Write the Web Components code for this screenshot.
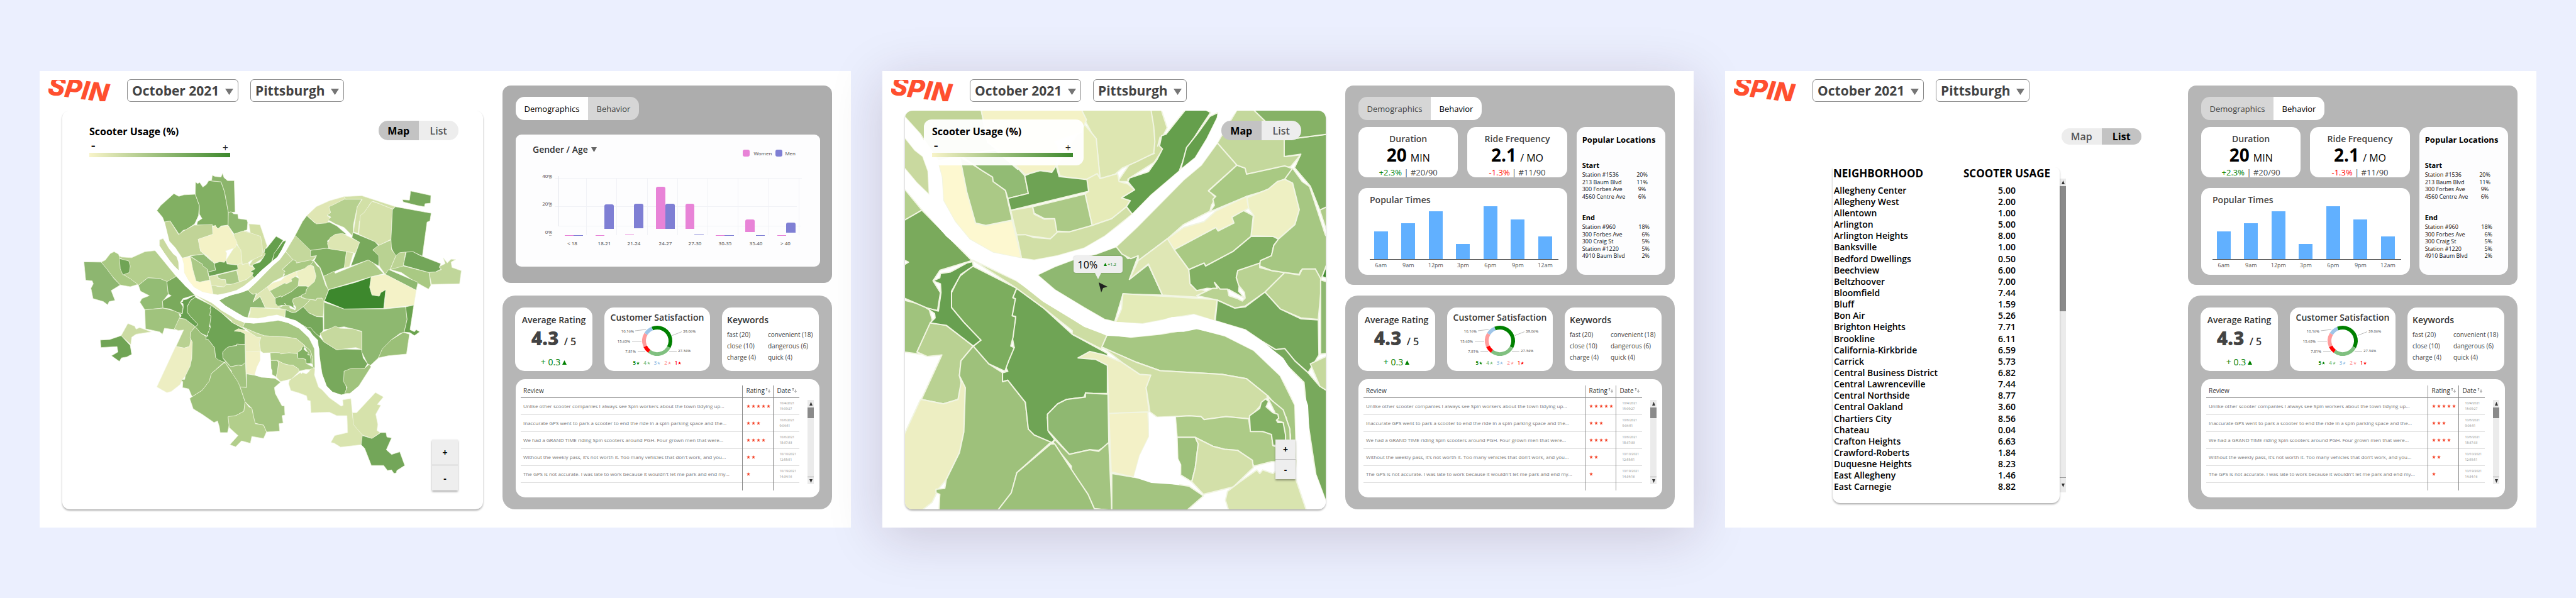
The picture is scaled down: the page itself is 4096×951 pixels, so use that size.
<!DOCTYPE html>
<html lang="en">
<head>
<meta charset="utf-8">
<meta name="viewport" content="width=device-width, initial-scale=1">
<title>Spin scooter dashboard</title>
<style>
  body { margin: 0; background: #ebeffe; font-family: "Open Sans", "Noto Sans", sans-serif; color: #000; }
</style>
</head>
<body>
<spin-board>
  <spin-screen>
    <spin-header slot="main"></spin-header>
    <usage-map slot="main" view="city"></usage-map>
    <demographics-panel slot="aside"></demographics-panel>
    <reviews-panel slot="aside"></reviews-panel>
  </spin-screen>
  <spin-screen raised>
    <spin-header slot="main"></spin-header>
    <usage-map slot="main" view="detail"></usage-map>
    <behavior-panel slot="aside"></behavior-panel>
    <reviews-panel slot="aside"></reviews-panel>
  </spin-screen>
  <spin-screen>
    <spin-header slot="main"></spin-header>
    <usage-list slot="main"></usage-list>
    <behavior-panel slot="aside"></behavior-panel>
    <reviews-panel slot="aside"></reviews-panel>
  </spin-screen>
</spin-board>

<script>
const BASE = `
  :host, *, *::before, *::after { box-sizing: border-box; }
  *, *::before, *::after { margin: 0; padding: 0; }
  :host { display: block; }
  button, select { font: inherit; color: inherit; border: 0; background: none; cursor: pointer; }
  table { border-collapse: collapse; }
  ul, ol { list-style: none; }
  svg { display: block; }
`;
function define(name, css, markup) {
  customElements.define(name, class extends HTMLElement {
    constructor() {
      super();
      const root = this.attachShadow({ mode: 'open' });
      const html = typeof markup === 'function' ? markup(this) : markup;
      root.innerHTML = `<style>${BASE}${css}</style>${html}`;
    }
  });
}
const down = (w, h, fill) => `<svg width="${w}" height="${h}" viewBox="0 0 10 10" preserveAspectRatio="none" aria-hidden="true"><path d="M0 0h10L5 10z" fill="${fill}"/></svg>`;
const up = (w, h, fill) => `<svg width="${w}" height="${h}" viewBox="0 0 10 10" preserveAspectRatio="none" aria-hidden="true"><path d="M0 10h10L5 0z" fill="${fill}"/></svg>`;
const star = (s, fill) => `<svg width="${s}" height="${s}" viewBox="0 0 20 20" aria-hidden="true"><path d="M10 0l2.6 7H20l-5.900 4.500L16.300 19 10 14.500 3.700 19l2.200-7.500L0 7h7.400z" fill="${fill}"/></svg>`;

/* Page frame */
define('spin-board', `
  :host { display: grid; grid-template-columns: repeat(3, minmax(0, 1fr)); gap: 50px;
          padding: 113px 63px 112px; overflow: hidden; }
`, `<slot></slot>`);

define('spin-screen', `
  :host { display: grid; grid-template-columns: minmax(0, 705fr) minmax(0, 524fr); column-gap: 31px;
          padding-right: 30px; background: #fff; }
  :host([raised]) { box-shadow: 0 14px 80px rgba(60, 20, 50, .18); }
  main { display: flex; flex-direction: column; padding: 13px 0 29px; }
  aside { display: flex; flex-direction: column; justify-content: space-between; gap: 16px; padding: 23px 0 29px; }
`, `<main><slot name="main"></slot></main><aside><slot name="aside"></slot></aside>`);

define('spin-header', `
  :host { display: flex; align-items: center; padding-left: 14px; height: 36px; flex: none; }
  .logo { overflow: hidden; margin-right: 25px; }
  .logo text { font: italic 800 41px Inter, "Open Sans", sans-serif; fill: #ff4f2f; }
  label { display: grid; align-items: center; margin-right: 19px; }
  select { grid-area: 1 / 1; appearance: none; height: 36px; border: 1px solid #8b8b8b; border-radius: 6px;
           background: #fff; color: #434343; font-size: 21px; font-weight: 700; padding: 0 28px 0 7px; }
  label svg { grid-area: 1 / 1; justify-self: end; margin: 3px 8px 0 0; pointer-events: none; }
  .month { width: 177px; } .city { width: 149px; }
`, `
  <svg class="logo" width="100" height="34" viewBox="0 0 100 34" role="img" aria-label="Spin"><text x="1" y="23" transform="rotate(8)">SPIN</text></svg>
  <label class="month"><select aria-label="Month"><option>October 2021</option></select>${down(13, 10, '#757575')}</label>
  <label class="city"><select aria-label="City"><option>Pittsburgh</option></select>${down(13, 10, '#757575')}</label>
`);

define('view-switch', `
  :host { display: inline-flex; width: 127px; height: var(--h, 31px); border-radius: 15px; overflow: hidden; flex: none; }
  button { flex: 1; background: #ededed; color: #555; font-size: 16px; font-weight: 600; }
  button[aria-pressed=true] { background: #c3c3c3; color: #000; font-weight: 700; }
`, el => ['Map', 'List'].map(t =>
  `<button type="button" aria-pressed="${t === el.getAttribute('value')}">${t}</button>`).join(''));

define('panel-tabs', `
  :host { display: flex; width: 196px; height: 37px; border-radius: 14px; overflow: hidden; flex: none; }
  button { background: #d6d6d6; color: #434343; font-size: 13px; font-weight: 500; }
  button:first-of-type { width: 115px; } button:last-of-type { width: 81px; }
  button[aria-pressed=true] { background: #fff; color: #000; }
`, el => ['Demographics', 'Behavior'].map(t =>
  `<button type="button" aria-pressed="${t === el.getAttribute('value')}">${t}</button>`).join(''));

define('scroll-track', `
  :host { display: flex; flex-direction: column; width: 10px; background: #ebebeb; flex: none; }
  span { display: flex; height: 12px; align-items: center; justify-content: center; flex: none; }
  i { background: #8a8a8a; height: var(--thumb, 17px); flex: none; }
  span:last-child { margin-top: auto; height: var(--foot, 12px); border-top: 1px solid #999; }
`, `<span>${up(5, 6, '#333')}</span><i></i><span>${down(5, 6, '#333')}</span>`);

/* City map. Points are in the city grid; "D" switches to the finer downtown grid, "@" switches back. */
const LAND = [
 ['#82b063','421,503 434,486 479,446 496,455 513,450 552,448 566,486 563,520 550,548 522,567 510,570 497,584 488,570 466,538 447,542 440,525'],
 ['#82b063','552,448 553,407 560,412 567,408 578,424 590,415 598,402 640,406 652,440 665,510 664,552 640,555 630,565 620,555 557,552 560,540 575,530 566,515 566,486'],
 ['#8cb56c','598,402 608,400 610,384 620,388 640,390 645,377 650,392 662,402 685,402 688,508 665,510 652,440 640,406'],
 ['#8eb86f','665,510 674,507 683,514 697,515 699,530 728,534 731,543 729,568 685,583 664,553'],
 ['#c1d497','447,542 466,538 495,584 510,573 548,552 557,552 610,550 612,583 562,600 570,640 610,672 592,660 580,650 537,655 508,664 485,630 463,606'],
 ['#d2dfa4','735,548 773,551 783,580 797,622 785,645 D 960,255 970,295 940,340 850,397 850,405 815,405 860,340 940,310 @ 720,570 740,578'],
 ['#dde6b1','682,583 715,572 745,580 775,590 780,620 D 942,270 938,310 880,338 830,360 805,382 755,395 742,270 688,170'],
 ['#e8edbb','D 700,210 742,260 755,395 710,398 640,390 618,385 608,350'],
 ['#e6ebb8','D 704,400 745,378 755,395 815,378 820,405 850,413 873,433 828,460 858,468 845,490 795,530 728,553 704,447 716,438'],
 ['#f4f2c6','612,560 620,552 628,565 640,557 664,553 680,582 695,612 D 690,240 600,270 612,290 605,355 595,372 550,368 500,382 465,350 440,320 @ 570,640 562,600 612,583'],
 ['#c9d99f','430,602 442,597 462,630 478,650 D 150,320 168,370 172,450 130,410 89,362 @ 445,645 430,622'],
 ['#fdf8d0','508,663 535,660 D 285,350 300,430 330,545 365,553 455,537 487,664 390,645 310,600 260,540 220,470 215,390 200,335'],
 ['#abc986','D 275,320 340,360 390,390 432,435 455,535 365,553 330,545 300,440 280,340'],
 ['#92bb74','D 275,315 @ 580,650 608,674 D 465,350 498,385 510,445 440,462 432,435 390,405 388,390 355,370'],
 ['#6ea354','D 498,385 515,378 550,368 590,374 605,352 615,388 710,398 716,438 450,502 440,462 510,445'],
 ['#dde6b2','D 450,502 525,490 530,515 565,532 600,530 610,578 585,598 530,590 470,585'],
 ['#abc986','D 525,490 704,447 728,553 690,568 650,575 607,572 600,530 565,530 530,512'],
 ['#d1dfa6','D 470,585 500,584 530,594 585,598 610,575 650,575 728,553 795,530 845,490 865,515 770,590 700,630 610,655 530,670 487,664'],
 ['#659f4c','828,590 852,603 D 1100,220 1055,290 1025,370 930,450 865,515 845,490 858,470 828,460 873,433 850,405 855,393 920,372 950,330 968,295 958,285 965,250 980,245'],
 ['#659f4c','D 1158,172 1130,185 1090,240 1050,290 1030,365 1080,325 1120,260 1155,190'],
 ['#b4cf8d','282,660 285,652 300,660 335,662 380,642 415,638 487,725 455,745 430,732 390,730 358,755 330,735 300,715 300,665'],
 ['#a9c983','231,677 245,670 262,648 275,642 290,650 296,668 298,690 305,718 330,733 356,752 330,760 296,754 262,718'],
 ['#8db670','172,676 231,677 250,700 275,733 296,754 265,773 278,806 258,810 253,821 238,810 203,800 196,765 204,750 200,740 178,738'],
 ['#70a455','293,665 325,673 330,690 327,712 305,720 296,700'],
 ['#93bc74','358,755 390,730 430,732 455,742 460,785 440,810 442,832 380,838 363,812 370,800 395,790 365,775'],
 ['#a0c37d','380,838 442,832 495,845 500,862 485,905 447,900 440,920 430,912 382,902'],
 ['#7aaa5c','487,725 550,788 510,800 D 185,740 210,780 200,840 @ 495,848 465,835 442,832 440,808 470,790 460,785 455,743'],
 ['#cbdba2','299,925 322,884 345,893 350,903 362,898 380,904 402,912 350,920 335,930 332,955'],
 ['#70a455','228,940 260,938 299,925 330,958 335,988 318,997 300,1000 293,1012 266,993 288,980 285,962 230,965'],
 ['#b9d192','D 175,882 230,890 322,960 280,1010 275,1060 285,1100 270,1140 220,1155 145,1140 215,990 165,995 130,980'],
 ['#edeec2','D 145,1140 220,1155 270,1140 285,1060 295,1100 290,1250 275,1320 230,1410 205,1440 @ 500,1090 470,1113 455,1117 421,1098 485,962'],
 ['#9ec17b','D 322,960 375,1020 422,1050 422,1080 440,1075 500,1150 510,1240 590,1285 @ 650,1015 607,1053 600,1080 575,1110 541,1131 530,1105 D 235,1520 205,1515 208,1460 195,1455 195,1443 225,1440 230,1410 275,1320 290,1250 295,1100 275,1060 280,1010'],
 ['#6fa455','D 470,765 560,830 660,920 780,985 780,1120 705,1120 700,1132 640,1140 600,1165 575,1200 580,1250 600,1275 590,1285 530,1260 510,1240 500,1150 440,1075 422,1080 422,1050 440,1045 432,1030 443,1010 447,965 462,965 455,930 467,860 455,858 463,800 457,797'],
 ['#7cad5e','D 320,690 470,765 457,797 466,800 455,858 467,862 458,930 450,960 462,965 443,1010 430,1045 375,1020 322,960 348,940 290,880 248,830 248,780 275,725'],
 ['#68a050','D 320,675 300,680 245,710 210,715 208,730 185,740 210,750 212,780 203,842 160,830 190,850 192,865 175,882 230,890 322,960 348,940 290,880 248,830 248,775 280,718 322,690'],
 ['#cddda3','D 320,670 470,740 560,800 780,925 760,970 660,920 660,908 560,830 470,765'],
 ['#8fb871','D 575,1190 610,1155 640,1140 705,1132 705,1118 730,1120 782,1122 785,1290 750,1312 720,1310 650,1325 600,1270 577,1245'],
 ['#a3c480','D 600,1275 650,1325 720,1310 750,1315 785,1285 @ 727,1100 705,1098 D 715,1480 700,1460 657,1410 657,1365 620,1320 595,1285'],
 ['#9cc079','650,1017 607,1053 600,1078 575,1110 540,1132 533,1137 545,1172 575,1190 616,1218 628,1213 634,1232 637,1252 662,1252 668,1225 664,1200 690,1195 718,1180 722,1148 705,1098 697,1080 680,1055 D 600,1290'],
 ['#a3c480','727,1054 812,1068 825,1070 843,1082 822,1100 825,1120 848,1162 856,1162 858,1193 848,1195 852,1220 838,1222 840,1247 795,1250 785,1227 755,1220 745,1170 722,1148 705,1098 727,1100'],
 ['#b2ce8b','722,1148 735,1165 745,1170 750,1195 757,1222 785,1227 795,1250 785,1272 745,1265 740,1288 710,1280 690,1300 670,1293 698,1262 668,1235 664,1198 690,1195 718,1180'],
 ['#f3f1c7','D 785,1185 918,1182 922,1265 890,1330 870,1402 793,1385'],
 ['#edeec2','D 680,1000 720,978 770,990 830,1015 890,1055 928,1058 925,1085 912,1100 922,1182 785,1187 780,1025 740,1005'],
 ['#a6c782','D 780,920 860,930 960,920 1085,900 1180,925 1280,975 1370,1060 1420,1160 1425,1340 1405,1340 1405,1260 1390,1200 1330,1130 1255,1070 1170,1055 960,1043 880,1015 760,965'],
 ['#cfdea5','D 765,965 880,1015 960,1043 1170,1055 1255,1070 1330,1130 1290,1175 1262,1205 1185,1198 1110,1208 1100,1198 1060,1195 950,1200 925,1182 912,1100 928,1058 890,1055 830,1015'],
 ['#adcb87','D 1012,1198 1060,1195 1100,1198 1110,1208 1185,1198 1262,1205 1268,1245 1310,1248 1340,1258 1345,1295 1420,1335 1400,1350 1340,1350 1280,1365 1270,1345 1225,1312 1180,1308 1140,1298 1080,1268 1018,1268'],
 ['#a6c782','D 1325,1130 1380,1175 1403,1240 1405,1310 1388,1290 1380,1218 1360,1212 1350,1180'],
 ['#82b063','D 1320,1138 1330,1147 1322,1165 1345,1185 1362,1190 1365,1203 1357,1210 1362,1218 1380,1218 1388,1260 1388,1295 1345,1295 1340,1258 1310,1248 1268,1248 1265,1195 1300,1170 1305,1150'],
 ['#9ec17b','D 1018,1268 1080,1268 1090,1290 1080,1370 1068,1418 1030,1395 1030,1360 1020,1340'],
 ['#d3e0a9','D 1080,1268 1140,1298 1180,1308 1225,1312 1275,1345 1278,1370 1210,1435 1108,1460 1068,1418 1080,1370 1090,1290'],
 ['#d9e4af','D 1290,1378 1300,1390 1310,1378 1345,1390 1370,1370 1385,1345 1425,1340 1420,1400 1458,1511 @ 985,1108 1010,1135 1050,1163 1057,1160 1055,1142 1083,1137 1088,1185 1092,1215 1125,1262 1118,1293 1048,1301 1027,1288 1015,1285 1028,1262 1072,1252 1070,1195 1035,1195 1010,1183 947,1185 945,1145 935,1143 932,1128 905,1118 878,1110 D 1183,1480 1190,1450 1230,1420'],
 ['#d6e2ab','1088,1185 1103,1185 1167,1117 1194,1132 1173,1157 1185,1160 1168,1190 1175,1225 1172,1245 1183,1252 1155,1272 1122,1260 1092,1225'],
 ['#73a659','1122,1262 1155,1272 1185,1252 1203,1252 1206,1267 1222,1270 1204,1310 1222,1326 1250,1317 1267,1363 1240,1380 1238,1388 1230,1390 1222,1378 1208,1380 1195,1363 1153,1363 1130,1305 1118,1293'],
 ['#8fb871','D 541,720 600,692 660,670 740,650 810,625 850,665 885,655 855,735 920,685 968,788 833,785 805,878 770,870 700,830 600,770'],
 ['#e4ebb8','D 833,783 1155,803 1145,875 1075,853 1000,865 970,872 900,885 808,880 828,835'],
 ['#c4d89c','893,587 945,635 D 1390,320 1440,315 1405,355 1255,380 1222,350 1155,275'],
 ['#c3d79b','D 810,625 880,560 970,470 1040,400 1100,350 1155,275 1222,350 1125,435 1150,460 1135,485 1130,505 1040,550 985,598 885,672 885,655 860,665 830,650'],
 ['#a9c983','D 1222,350 1250,360 1255,380 1385,352 1412,362 1385,400 1340,430 1255,455 1130,507 1145,485 1140,465 1150,455 1125,437'],
 ['#f4f2c7','D 985,598 1040,560 1110,540 1150,505 1180,490 1255,455 1262,495 1205,525 1212,545 1158,570 1150,560 1008,635'],
 ['#eef0c3','D 1257,460 1330,430 1360,405 1385,397 1412,410 1435,500 1420,550 1365,598 1345,590 1270,588 1280,520 1262,495'],
 ['#a9c983','D 1008,635 1150,560 1158,572 1212,545 1205,525 1245,503 1278,520 1270,590 1210,640 1115,690 1110,680 1058,702'],
 ['#dfe7b5','D 985,598 1008,635 1058,702 1065,755 1115,775 1085,795 968,788 920,683 880,715 855,735 885,672'],
 ['#82b063','D 1058,702 1110,680 1115,690 1210,640 1270,590 1345,590 1365,600 1348,620 1340,655 1300,680 1225,710 1220,730 1230,755 1228,775 1250,800 1195,770 1120,765 1085,773 1062,750'],
 ['#b9d292','D 1225,705 1300,680 1300,695 1340,705 1385,712 1318,778 1250,825 1215,832 1155,805 1085,790 1140,765 1155,765 1145,745 1165,768 1190,768 1195,790 1225,800 1240,808 1250,798 1248,780 1228,755 1220,728'],
 ['#a6c782','D 1412,360 1445,405 1470,422 1524,585 @ 1007,770 993,808 D 1505,745 1490,700 1440,705 1435,718 1385,712 1340,705 1300,690 1302,672 1340,655 1348,620 1365,598 1420,550 1435,500 1412,410 1385,397'],
 ['#bdd495','D 1318,778 1385,712 1435,720 1445,700 1490,700 1512,740 1500,870 1440,865 1370,835'],
 ['#76a85b','D 1155,805 1215,832 1250,828 1318,778 1370,835 1440,868 1500,872 1502,990 1465,1050 1420,1010 1380,970 1355,972 1310,945 1250,905 1148,875'],
 ['#78a95c','D 1310,945 1355,972 1385,968 1420,1010 1465,1050 @ 990,945 1035,973 1050,970 1120,972 1125,1000 1140,1020 1130,1035 1060,1045 1070,1120 1050,1125 1020,1115 1000,1095 985,1055 975,990 970,940'],
 ['#8eb870','991,812 1060,835 1197,835 1270,828 1275,870 1265,913 1250,918 1220,940 1190,980 1177,1000 1150,1025 1140,1020 1120,980 1120,910 1060,895 991,905'],
 ['#c6d99e','978,917 1030,893 1045,900 1065,901 1090,902 1120,912 1120,972 1100,965 1075,968 1035,973 990,945'],
 ['#82b063','945,637 1000,630 1068,640 1062,695 1033,706 1022,712 990,725 978,695 958,672 966,655 945,658'],
 ['#86b266','893,587 918,540 933,520 960,545 1010,542 1035,555 1068,583 1030,585 1003,605 1008,632 1000,630 945,637'],
 ['#dfe6b3','933,520 965,490 1010,470 1060,456 1065,465 1020,485 1010,492 1014,510 1002,520 1015,530 1000,545 965,548'],
 ['#b6d08f','1008,490 1020,485 1060,465 1100,462 1120,465 1105,490 1092,550 1090,590 1082,582 1060,560 1030,548 1012,538 1005,535 1015,525 1002,518 1014,510'],
 ['#d2e0a7','1060,456 1120,453 1235,490 1225,498 1160,472 1150,478 1130,510 1112,540 1108,580 1092,575 1105,490 1122,465 1065,465'],
 ['#d5e1aa','1155,472 1180,480 1225,498 1220,600 1180,620 1165,608 1110,583 1115,520 1128,510'],
 ['#78a95c','1235,490 1357,512 1353,538 1343,542 1327,657 1295,642 1265,645 1235,657 1218,622 1220,600 1225,500'],
 ['#78a95c','1259,466 1283,468 1287,437 1356,452 1355,478 1336,480 1334,490 1310,486 1262,474'],
 ['#dde6b2','1003,615 1012,595 1030,583 1055,580 1113,610 1098,647 1062,640 1010,632'],
 ['#d5e1aa','1068,642 1092,645 1078,692 1060,697'],
 ['#78a95c','1090,577 1165,608 1178,622 1158,636 1175,645 1180,655 1178,690 1160,680 1142,670 1083,690 1113,610 1087,595'],
 ['#b9d292','1175,622 1220,602 1222,635 1237,655 1218,700 1200,718 1180,690 1178,655 1158,636'],
 ['#bbd394','1237,655 1250,645 1270,643 1262,690 1255,712 1218,700'],
 ['#a9c983','1262,690 1350,712 1356,755 1348,768 1300,742 1255,712 1218,702'],
 ['#73a659','1272,643 1295,642 1320,655 1390,682 1385,695 1392,700 1372,710 1350,712 1262,688'],
 ['#c0d69a','1350,712 1372,710 1392,702 1385,692 1405,682 1398,662 1412,680 1425,667 1441,668 1425,677 1428,695 1460,706 1454,750 1358,752'],
 ['#aecb88','990,725 1025,708 1030,715 1142,670 1160,680 1195,716 1150,727 1005,770'],
 ['#8eb870','1212,702 1312,745 1306,772 1200,718'],
 ['#f4f2c7','1150,727 1200,718 1306,772 1298,822 1197,833 1202,770 1180,792 1155,788 1147,762'],
 ['#3d882d','1152,727 1147,762 1155,788 1180,792 1185,780 1202,770 1195,833 1060,835 993,808 1008,770 1100,745'],
 ['#6aa24f','1270,828 1298,822 1285,905 1300,912 1306,905 1318,912 1300,925 1285,915 1265,913 1275,870'],
 ['#9bc078','1262,914 1283,920 1273,987 1210,993 1177,1000 1190,970 1220,940'],
 ['#a0c37d','1060,1045 1085,1035 1130,1035 1145,1022 1152,1030 1110,1095 1080,1120 1062,1120 1070,1100 1058,1080']
];
/* Water and open ground drawn over the land */
const WATER = [
 'D 541,720 600,692 660,670 740,650 810,625 880,560 970,470 1040,400 1100,350 1155,275 1190,210 1225,160 @ 893,585 870,600 860,603 D 1165,166 1158,172 1155,190 1120,260 1080,325 1030,365 1025,370 930,450 865,515 830,545 770,590 700,630 610,655 530,670 487,664 390,645 310,600 260,540 220,470 215,390 200,335 160,290 @ 485,630 463,606 447,542 430,570 444,598 462,630 478,650 D 150,320 168,370 172,450 130,410 89,362 @ 430,622 400,610 415,638 440,665 D 89,430 155,505 230,590 320,665 470,740 560,810 660,870 700,895 780,925 860,930 960,920 1000,912 1040,912 1085,903 1180,925 1280,975 1370,1060 1405,1120 1420,1160 1425,1300 1425,1340 @ 967,1060 980,1080 1000,1110 1040,1138 1080,1137 1110,1130 1110,1095 1080,1120 1050,1125 1020,1115 1000,1095 985,1055 D 1480,1350 1470,1260 1465,1160 1440,1090 1380,1000 1310,945 1250,905 1150,875 1075,853 1040,860 1000,862 970,872 900,885 805,878 770,870 700,830 600,770',
 'D 922,1182 945,1200 1012,1198 1015,1240 1020,1340 1030,1360 1025,1428 930,1422 870,1402 890,1330 922,1265'
];
function outline(points) {
  let fine = false, first = true, d = '';
  for (const t of points.split(' ')) {
    if (t === 'D') { fine = true; continue; }
    if (t === '@') { fine = false; continue; }
    let [x, y] = t.split(',').map(Number);
    if (fine) { x = (x + 1168) / 2.7; y = (y + 1456) / 2.7; }
    d += (first ? 'M' : 'L') + x.toFixed(1) + ' ' + y.toFixed(1);
    first = false;
  }
  return d + 'Z';
}
const VIEWS = {
  city: { box: '98 166 1436 1345', line: 1 },
  detail: { box: '465.600 600.700 531.900 498.100', line: 2 }
};
define('usage-map', `
  :host { display: grid; grid-template: minmax(0, 1fr) / minmax(0, 1fr); flex: 1; min-height: 634px; margin: 14px 0 0 36px;
          border-radius: 12px; background: #fff; box-shadow: 0 2px 3px rgba(0, 0, 0, .32); clip-path: inset(0 -6px -8px -6px); }
  .map { grid-area: 1 / 1; contain: size; width: 100%; height: 100%; border-radius: 12px; overflow: hidden; }
  .map path { vector-effect: non-scaling-stroke; stroke-linejoin: round; }
  .over { grid-area: 1 / 1; position: relative; display: flex; flex-direction: column; justify-content: space-between; }
  .top { display: flex; justify-content: space-between; align-items: flex-start; padding: 14px 39px 0 30px; }
  .top view-switch { margin-top: 2px; }
  .legend { width: 254px; height: 73px; padding: 8px 17px 0 13px; border-radius: 12px; background: rgba(255, 255, 255, .95); }
  h2 { font-size: 16px; line-height: 22px; font-weight: 700; }
  .ends { display: flex; justify-content: space-between; font-size: 20px; line-height: 20px; height: 23px; padding: 1px 3px 0;
          color: #222; font-weight: 700; }
  .ends span:last-child { padding-top: 4px; font-size: 16px; font-weight: 500; }
  .bar { height: 7px; background: linear-gradient(90deg, #f8f4c9, #3c882c); }
  .zoom { align-self: flex-end; margin: 0 40px 30px 0; width: 41px; display: flex; flex-direction: column; gap: 1px;
          background: #bbb; box-shadow: 0 2px 3px rgba(0, 0, 0, .35); }
  .zoom button { height: 40px; background: #eee; font-size: 14px; font-weight: 700; }
  :host([view=detail]) .zoom { width: 32px; margin: 0 48px 48px 0; }
  :host([view=detail]) .zoom button { height: 31px; }
  .tip { position: absolute; left: 40%; top: 36.500%; width: 78px; height: 27px; border-radius: 4px; background: #efefef;
         display: flex; align-items: center; gap: 10px; padding-left: 7px; font-size: 16px; font-weight: 500;
         box-shadow: 0 0 2px rgba(0, 0, 0, .25); }
  .tip::after { content: ""; position: absolute; left: 34px; top: 27px; border: 5px solid transparent; border-top: 10px solid #efefef; border-bottom: 0; }
  .tip small { display: flex; align-items: center; gap: 1px; font-size: 7px; color: #008000; }
  .cursor { position: absolute; left: 46%; top: 43%; }
`, el => {
  const v = VIEWS[el.getAttribute('view')] || VIEWS.city;
  const detail = v === VIEWS.detail;
  return `
  <svg class="map" viewBox="${v.box}" preserveAspectRatio="none" role="img" aria-label="Scooter usage by neighborhood">
    <g stroke="#f1f5e2" stroke-opacity="${detail ? 1 : 0.75}" stroke-width="${v.line}">${LAND.map(([c, p]) => `<path fill="${c}" d="${outline(p)}"/>`).join('')}</g>
    <g fill="#fff">${WATER.map(p => `<path d="${outline(p)}"/>`).join('')}</g>
  </svg>
  <div class="over">
    <div class="top">
      <div class="legend"><h2>Scooter Usage (%)</h2><div class="ends"><span>-</span><span>+</span></div><div class="bar"></div></div>
      <view-switch value="Map"></view-switch>
    </div>
    <div class="zoom"><button type="button" aria-label="Zoom in">+</button><button type="button" aria-label="Zoom out">-</button></div>
    ${detail ? `<div class="tip" role="tooltip"><span>10%</span><small>${up(5, 5, '#008000')}+1.2</small></div>
    <svg class="cursor" width="14" height="16" viewBox="0 0 14 16" aria-hidden="true"><path d="M0 0l14 7-7 2-3 7z" fill="#1f1f1f"/></svg>` : ''}
  </div>`;
});

/* Neighborhood list */
const HOODS = [['Allegheny Center','5.00'],['Allegheny West','2.00'],['Allentown','1.00'],['Arlington','5.00'],['Arlington Heights','8.00'],['Banksville','1.00'],['Bedford Dwellings','0.50'],['Beechview','6.00'],['Beltzhoover','7.00'],['Bloomfield','7.44'],['Bluff','1.59'],['Bon Air','5.26'],['Brighton Heights','7.71'],['Brookline','6.11'],['California-Kirkbride','6.59'],['Carrick','5.73'],['Central Business District','6.82'],['Central Lawrenceville','7.44'],['Central Northside','8.77'],['Central Oakland','3.60'],['Chartiers City','8.56'],['Chateau','0.04'],['Crafton Heights','6.63'],['Crawford-Roberts','1.84'],['Duquesne Heights','8.23'],['East Allegheny','1.46'],['East Carnegie','8.82']];
define('usage-list', `
  :host { display: flex; flex-direction: column; flex: 1; }
  view-switch { --h: 26px; align-self: flex-end; margin: 42px 43px 36px 0; }
  .list { display: flex; align-items: flex-start; margin-left: 171px; }
  .card { width: 361px; padding-bottom: 17px; border-radius: 0 8px 12px 12px; background: #fff; box-shadow: 0 2px 3px rgba(0, 0, 0, .32);
          clip-path: inset(0 -6px -8px -6px); }
  table { width: 100%; table-layout: fixed; }
  col:last-child { width: 168px; }
  th { height: 28px; vertical-align: top; font-size: 17px; line-height: 20px; font-weight: 700; text-align: left; padding-left: 1px; white-space: nowrap; }
  th:last-child, td:last-child { text-align: center; padding: 0; }
  td { height: 18px; line-height: 18px; font-size: 14px; font-weight: 600; padding-left: 2px; }
  tbody tr:nth-child(7n) td { height: 19px; }
  scroll-track { --thumb: 199px; --foot: 24px; height: 499px; margin-top: 18px; }
`, `
  <view-switch value="List"></view-switch>
  <div class="list">
    <div class="card"><table><colgroup><col><col></colgroup>
      <thead><tr><th scope="col">NEIGHBORHOOD</th><th scope="col">SCOOTER USAGE</th></tr></thead>
      <tbody>${HOODS.map(([n, v]) => `<tr><td>${n}</td><td>${v}</td></tr>`).join('')}</tbody>
    </table></div>
    <scroll-track></scroll-track>
  </div>
`);

/* Demographics */
const W = '#e883d7', M = '#7f7fd4';
const BARS = [[W,78,160,14,2],[M,92,160,15,2],[W,127,160,14,2],[M,141,111,15,39],[W,174,159,14,2],[M,188,110,15,39],[W,223,83,15,67],[M,238,110,15,40],[W,270,110,14,40],[M,284,159,15,2],[W,318,160,14,2],[M,332,160,15,2],[W,365,135,15,20],[M,382,160,14,2],[W,416,160,14,2],[M,430,140,15,16]];
define('demographics-panel', `
  :host { padding: 18px 19px 26px 21px; border-radius: 13px; background: #adadad; }
  .card { margin-top: 23px; padding-top: 14px; border-radius: 9px; background: #fdfdfe; }
  .head { display: flex; justify-content: space-between; padding: 0 39px 0 27px; height: 30px; }
  h2 { display: flex; align-items: center; gap: 5px; font-size: 14px; line-height: 20px; height: 20px; font-weight: 600; color: #333; }
  ul { display: flex; align-items: center; margin-top: 10px; height: 11px; font-size: 8px; line-height: 11px; color: #444; }
  li { display: flex; align-items: center; gap: 6px; margin-left: 6px; }
  li + li { gap: 4px; }
  li::before { content: ""; width: 11px; height: 11px; border-radius: 3px; background: var(--c); }
  .plot { width: 100%; height: auto; }
  text { font-size: 8px; fill: #444; }
`, `
  <panel-tabs value="Demographics"></panel-tabs>
  <div class="card">
    <div class="head"><h2>Gender / Age ${down(9, 8, '#666')}</h2>
      <ul><li style="--c:${W}">Women</li><li style="--c:${M}">Men</li></ul></div>
    <svg class="plot" viewBox="0 44 484 166" role="img" aria-label="Riders by gender and age">
      <g fill="#f1f2f6">${[112, 160, 209, 257, 305, 353, 401, 450].map(x => `<rect x="${x}" y="69" width="1" height="91"/>`).join('')}
        ${[69, 114, 145].map(y => `<rect x="${y === 145 ? 68 : 62}" y="${y}" width="${y === 69 ? 393 : 385}" height="1"/>`).join('')}
        <rect x="68" y="66" width="1" height="80" fill="#e4e6ec"/></g>
      <g fill="#999">${[69, 114, 160].map(y => `<rect x="53" y="${y}" width="4" height="1" opacity=".6"/>`).join('')}</g>
      ${BARS.map(([c, x, y, w, h]) => `<path fill="${c}" d="${h < 5 ? `M${x} ${y}h${w}v1h-${w}z` : `M${x} ${y + h}v-${h - 3}q0-3 3-3h${w - 6}q3 0 3 3v${h - 3}z`}"/>`).join('')}
      <g text-anchor="end"><text x="58" y="69">40%</text><text x="58" y="113">20%</text><text x="58" y="158">0%</text></g>
      <g text-anchor="middle">${[['&lt; 18', 90], ['18-21', 141], ['21-24', 188], ['24-27', 238], ['27-30', 285], ['30-35', 333], ['35-40', 382], ['&gt; 40', 429]].map(([t, x]) => `<text x="${x}" y="176">${t}</text>`).join('')}</g>
    </svg>
  </div>
`);

/* Behavior */
const TIMES = [['6am',44],['9am',57],['12pm',76],['3pm',24],['6pm',84],['9pm',63],['12am',36]];
const places = (name, rows) => `<table class="${name.toLowerCase()}"><caption>${name}</caption>${rows.map(([p, v]) => `<tr><th scope="row">${p}</th><td>${v}</td></tr>`).join('')}</table>`;
define('behavior-panel', `
  :host { padding: 18px 15px 16px 21px; border-radius: 13px; background: #b6b6b6; }
  .grid { display: grid; grid-template-columns: minmax(0, 158fr) minmax(0, 158fr) minmax(0, 141fr); grid-template-rows: 80px 138px;
          gap: 17px 15px; margin-top: 11px; }
  section { border-radius: 14px; background: #fff; color: #434343; }
  h2 { font-size: 14px; line-height: 20px; font-weight: 600; }
  .stat { text-align: center; padding-top: 9px; }
  .value { font-size: 16px; line-height: 30px; font-weight: 500; color: #000; }
  .value b { font-size: 28px; margin-right: 2px; }
  .note { font-size: 13px; line-height: 16px; }
  .good { color: #008000; } .bad { color: #f00; }
  .times { grid-area: 2 / 1 / 3 / 3; padding: 9px 13px 0 14px; }
  .times h2 { padding-left: 4px; }
  ol { display: grid; grid-template-columns: repeat(7, 1fr); grid-template-rows: 84px 1px; }
  ol::after { content: ""; grid-area: 2 / 1 / 3 / 8; margin: 0 1px 0 4px; background: #444; }
  li { grid-row: 1; height: 104px; display: grid; grid-template-rows: 84px 20px; justify-items: center; align-items: end;
       font-size: 9px; line-height: 20px; color: #555; }
  li i { width: 22px; background: #61b0ff; }
  .places { grid-area: 1 / 3 / 3 / 4; padding: 10px 25px 0 9px; background: #fdfdfe; color: #111; }
  .places h2 { font-size: 13px; color: #000; font-weight: 700; white-space: nowrap; margin-bottom: 22px; }
  table { width: 100%; font-size: 9px; line-height: 11px; }
  caption { text-align: left; font-size: 11px; line-height: 18px; font-weight: 700; color: #000; }
  th { font-weight: 400; text-align: left; white-space: nowrap; } td { text-align: right; }
  tr { height: 11px; } tr:nth-child(2n) { height: 12px; }
  .start td { text-align: center; width: 24px; }
  .end { margin-top: 19px; }
`, `
  <panel-tabs value="Behavior"></panel-tabs>
  <div class="grid">
    <section class="stat"><h2>Duration</h2><p class="value"><b>20</b> MIN</p><p class="note"><span class="good">+2.3%</span> | #20/90</p></section>
    <section class="stat"><h2>Ride Frequency</h2><p class="value"><b>2.1</b> / MO</p><p class="note"><span class="bad">-1.3%</span> | #11/90</p></section>
    <section class="times"><h2>Popular Times</h2><ol>${TIMES.map(([t, h]) => `<li><i style="height:${h}px"></i><span>${t}</span></li>`).join('')}</ol></section>
    <section class="places"><h2>Popular Locations</h2>
      ${places('Start', [['Station #1536', '20%'], ['213 Baum Blvd', '11%'], ['300 Forbes Ave', '9%'], ['4560 Centre Ave', '6%']])}
      ${places('End', [['Station #960', '18%'], ['300 Forbes Ave', '6%'], ['300 Craig St', '5%'], ['Station #1220', '5%'], ['4910 Baum Blvd', '2%']])}
    </section>
  </div>
`);

/* Reviews */
const REVIEWS = [
  ['Unlike other scooter companies I always see Spin workers about the town tidying up...', 5, '10/4/2021', '15:09:27'],
  ['Inaccurate GPS went to park a scooter to end the ride in a spin parking space and the...', 3, '10/6/2021', '9:04:51'],
  ['We had a GRAND TIME riding Spin scooters around PGH. Four grown men that were...', 4, '10/6/2021', '18:37:33'],
  ['Without the weekly pass, it’s not worth it. Too many vehicles that don’t work, and you...', 2, '10/10/2021', '12:55:51'],
  ["The GPS is not accurate. I was late to work because it wouldn't let me park and end my...", 1, '10/19/2021', '14:34:16']];
const SHARES = [[39.06, '#008000'], [27.34, '#80c080'], [7.81, '#f00'], [15.63, '#ff9c9c'], [10.16, '#9fc5e8']];
let turned = 0;
const RING = SHARES.map(([s, c]) => { const r = `<circle cx="84" cy="53" r="21" fill="none" stroke="${c}" stroke-width="6" pathLength="100" stroke-dasharray="${s} 100" stroke-dashoffset="${-turned}"/>`; turned += s; return r; }).join('');
const SORT = `<svg width="8" height="9" viewBox="0 0 16 18" fill="none" stroke="#555" stroke-width="1.500" aria-hidden="true"><path d="M4 11V2M1 5l3-3 3 3M12 7v9M9 13l3 3 3-3"/></svg>`;
define('reviews-panel', `
  :host { padding: 19px 21px 19px 20px; border-radius: 20px; background: #b6b6b6; }
  .cards { display: grid; grid-template-columns: minmax(0, 123fr) minmax(0, 168fr) minmax(0, 154fr); gap: 19px; height: 101px; }
  section { border-radius: 15px; background: #fff; color: #434343; }
  h2 { font-size: 14px; line-height: 20px; font-weight: 600; white-space: nowrap; color: #333; }
  .avg { padding-top: 10px; text-align: center; }
  .avg p { font-size: 16px; line-height: 38px; font-weight: 600; color: #333; }
  .avg b { font-size: 30px; color: #434343; margin-right: 4px; }
  .avg .delta { display: flex; justify-content: center; align-items: center; gap: 3px; font-size: 14px; line-height: 28px; font-weight: 500; color: #008000; }
  .sat { padding-top: 6px; text-align: center; }
  .sat text { font-size: 6px; fill: #444; }
  .sat ul { display: flex; justify-content: center; gap: 6px; margin-top: 3px; font-size: 8px; line-height: 16px; font-weight: 600; }
  .sat li { display: flex; align-items: center; gap: 1px; color: var(--c); }
  .ring { width: 100%; height: 51px; }
  .key { padding: 10px 8px 0; }
  .key ul { display: grid; grid-template-columns: 65px 1fr; margin-top: 4px; font-size: 10px; line-height: 18px; white-space: nowrap; }
  .reviews { display: flex; margin: 13px -1px 0 1px; height: 188px; padding: 10px 9px 11px 8px; border-radius: 15px; }
  table { flex: 1; table-layout: fixed; width: 0; }
  col.r { width: 49px; } col.d { width: 42px; }
  thead tr { height: 19px; border-bottom: 1px solid #888; }
  th { font-size: 10px; line-height: 16px; font-weight: 500; text-align: left; color: #333; vertical-align: top; white-space: nowrap; }
  th:first-child, td:first-child { padding-left: 4px; }
  th + th, td + td { border-left: 1px solid #888; padding-left: 6px; }
  th svg { display: inline; margin-left: 1px; }
  tbody tr { height: 27px; border-bottom: 1px solid #ddd; }
  tfoot tr { height: 13px; }
  td { font-size: 8px; line-height: 9px; color: #777; white-space: nowrap; }
  td + td + td { padding-left: 10px; font-size: 5px; color: #888; }
  .stars { display: flex; gap: 2px; }
  time { display: block; }
  scroll-track { height: 134px; margin: 23px 0 0 13px; }
`, `
  <div class="cards">
    <section class="avg"><h2>Average Rating</h2><p><b>4.3</b> / 5</p><div class="delta">+ 0.3 ${up(7, 7, '#008000')}</div></section>
    <section class="sat"><h2>Customer Satisfaction</h2>
      <svg class="ring" viewBox="0 26 168 51" role="img" aria-label="Share of ratings">
        <g transform="rotate(-112 84 53)">${RING}</g>
        <path d="M49 37l17-2M44 53.500h15M53 69.500h12M103 69.500h12M108 44.500l15-6" stroke="#999" stroke-width=".7" fill="none"/>
        <g text-anchor="end"><text x="47" y="40">10.16%</text><text x="41" y="56">15.63%</text><text x="50" y="72">7.81%</text></g>
        <text x="125" y="40">39.06%</text><text x="117" y="71">27.34%</text>
      </svg>
      <ul>${[[5, '#008000'], [4, '#80c080'], [3, '#9fc5e8'], [2, '#ff9c9c'], [1, '#f00']].map(([n, c]) => `<li style="--c:${c}">${n}${star(5, c)}</li>`).join('')}</ul></section>
    <section class="key"><h2>Keywords</h2><ul><li>fast (20)</li><li>convenient (18)</li><li>close (10)</li><li>dangerous (6)</li><li>charge (4)</li><li>quick (4)</li></ul></section>
  </div>
  <section class="reviews">
    <table><colgroup><col><col class="r"><col class="d"></colgroup>
      <thead><tr><th scope="col">Review</th><th scope="col">Rating${SORT}</th><th scope="col">Date${SORT}</th></tr></thead>
      <tbody>${REVIEWS.map(([t, n, d, h]) => `<tr><td>${t}</td><td><span class="stars" role="img" aria-label="${n} stars">${star(6, '#f43e22').repeat(n)}</span></td><td><time>${d}</time><time>${h}</time></td></tr>`).join('')}</tbody>
      <tfoot><tr><td></td><td></td><td></td></tr></tfoot>
    </table>
    <scroll-track></scroll-track>
  </section>
`);
</script>
</body>
</html>
